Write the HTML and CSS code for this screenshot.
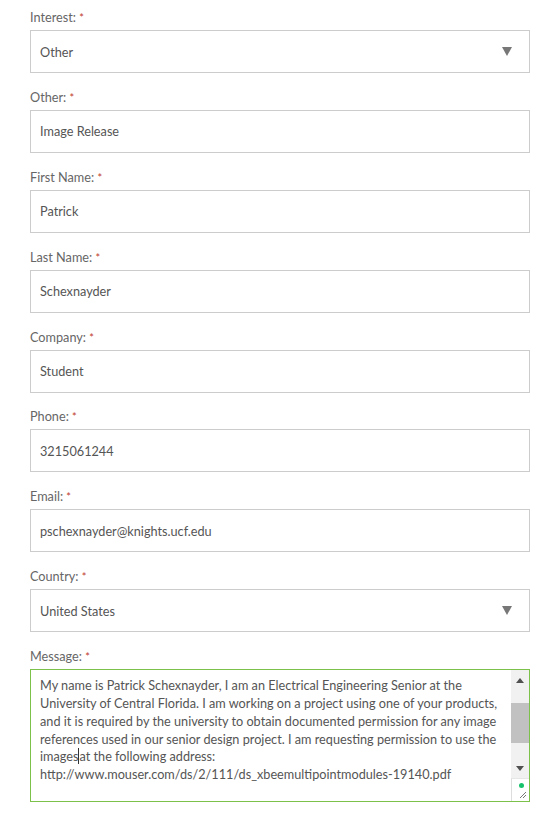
FILE: index.html
```html
<!DOCTYPE html>
<html>
<head>
<meta charset="utf-8">
<link rel="stylesheet" href="styles.css">
</head>
<body>
<form class="form">
  <div class="field">
    <label class="label">Interest: <span class="req">*</span></label>
    <div class="box select"><span>Other</span><span class="caret"></span></div>
  </div>
  <div class="field">
    <label class="label">Other: <span class="req">*</span></label>
    <div class="box">Image Release</div>
  </div>
  <div class="field">
    <label class="label">First Name: <span class="req">*</span></label>
    <div class="box">Patrick</div>
  </div>
  <div class="field">
    <label class="label">Last Name: <span class="req">*</span></label>
    <div class="box">Schexnayder</div>
  </div>
  <div class="field">
    <label class="label">Company: <span class="req">*</span></label>
    <div class="box">Student</div>
  </div>
  <div class="field">
    <label class="label">Phone: <span class="req">*</span></label>
    <div class="box">3215061244</div>
  </div>
  <div class="field">
    <label class="label">Email: <span class="req">*</span></label>
    <div class="box">pschexnayder@knights.ucf.edu</div>
  </div>
  <div class="field">
    <label class="label">Country: <span class="req">*</span></label>
    <div class="box select"><span>United States</span><span class="caret"></span></div>
  </div>
  <div class="field">
    <label class="label">Message: <span class="req">*</span></label>
    <div class="textarea">
      <div class="ta-text">My name is Patrick Schexnayder, I am an Electrical Engineering Senior at the<br>University of Central Florida. I am working on a project using one of your products,<br>and it is required by the university to obtain documented permission for any image<br>references used in our senior design project. I am requesting permission to use the<br>images<span class="cursor">at the following address:</span><br>http://www.mouser.com/ds/2/111/ds_xbeemultipointmodules-19140.pdf</div>
      <div class="scrollbar">
        <div class="sb-up"></div>
        <div class="sb-track"><div class="sb-thumb"></div></div>
        <div class="sb-down"></div>
        <div class="sb-corner">
          <span class="dot"></span>
          <svg class="grip" width="9" height="9" viewBox="0 0 9 9"><path d="M8 2 L2 8 M8 5 L5 8" stroke="#777" stroke-width="1" fill="none"/></svg>
        </div>
      </div>
    </div>
  </div>
</form>
</body>
</html>
```

FILE: styles.css
```css
html, body {
  margin: 0;
  padding: 0;
  background: #fff;
}
body {
  font-family: "Lato", "Open Sans", sans-serif;
  color: #555;
}
.form {
  padding: 9px 20px 0 30px;
  display: flex;
  flex-direction: column;
  gap: 15.9px;
}
.field {
  display: flex;
  flex-direction: column;
  gap: 5px;
}
.label {
  display: block;
  height: 16px;
  font-size: 12.7px;
  line-height: 16px;
  color: #666;
  overflow: visible;
}
.req {
  color: #c0392b;
  font-size: 11px;
  line-height: 0;
}
.box {
  height: 43px;
  box-sizing: border-box;
  border: 1px solid #ccc;
  display: flex;
  align-items: center;
  padding: 0 9px;
  font-size: 12.7px;
  color: #555;
  width: 500px;
}
.select {
  justify-content: space-between;
}
.caret {
  width: 0;
  height: 0;
  border-left: 5px solid transparent;
  border-right: 5px solid transparent;
  border-top: 9px solid #777;
  margin-right: 8px;
}
.textarea {
  width: 500px;
  height: 133px;
  box-sizing: border-box;
  border: 1px solid #7cc24a;
  display: flex;
}
.ta-text {
  flex: 1;
  padding: 7px 0 0 9px;
  font-size: 12.7px;
  line-height: 17.8px;
  color: #555;
  white-space: nowrap;
  overflow: hidden;
}
.cursor {
  border-left: 1px solid #333;
}
.scrollbar {
  width: 18px;
  display: flex;
  flex-direction: column;
  background: #f1f1f1;
}
.sb-up, .sb-down {
  height: 20px;
  display: flex;
  align-items: center;
  justify-content: center;
}
.sb-up::before {
  content: "";
  border-left: 4px solid transparent;
  border-right: 4px solid transparent;
  border-bottom: 5px solid #505050;
}
.sb-down::before {
  content: "";
  border-left: 4px solid transparent;
  border-right: 4px solid transparent;
  border-top: 5px solid #505050;
}
.sb-track {
  flex: 1;
  padding-top: 13px;
}
.sb-thumb {
  height: 40px;
  background: #c1c1c1;
}
.sb-corner {
  background: #fff;
  border-left: 1px solid #ddd;
  border-top: 1px solid #e6e6e6;
  display: flex;
  flex-direction: column;
  align-items: flex-end;
  padding: 4px 2px 2px 0;
  box-sizing: border-box;
  height: 23px;
}
.dot {
  width: 5px;
  height: 5px;
  border-radius: 50%;
  background: #15c26b;
  margin-right: 3px;
}
.grip {
  margin-top: 2px;
}
```
